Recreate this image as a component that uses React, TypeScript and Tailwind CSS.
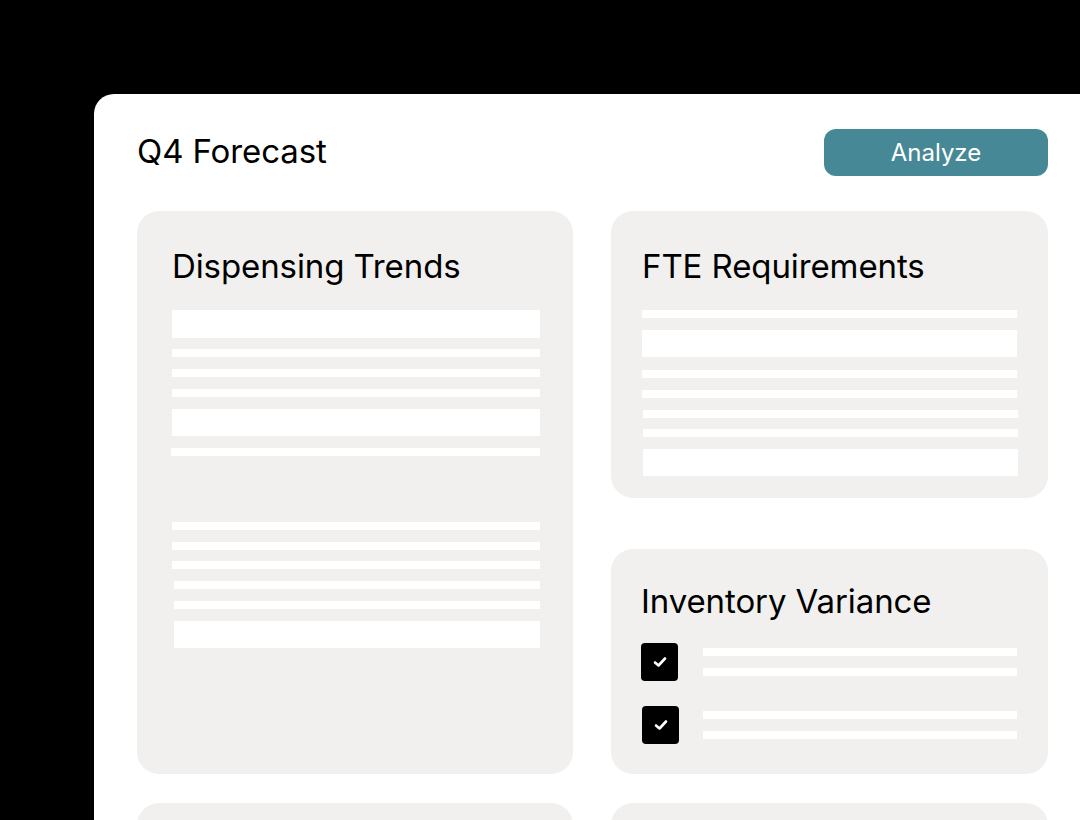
const font = { fontFamily: "Inter, 'Noto Sans', sans-serif" };

function Line({ tall = false, className = "" }: { tall?: boolean; className?: string }) {
  return <div className={`${tall ? "h-[27px]" : "h-2"} bg-white ${className}`} />;
}

function CheckBox() {
  return (
    <div className="flex h-[38px] w-[37px] shrink-0 items-center justify-center rounded-[4px] bg-black">
      <svg width="14" height="12" viewBox="0 0 14 12" fill="none">
        <path d="M2 6.5 L5.5 9.5 L12 2.5" stroke="white" strokeWidth="2.6" strokeLinecap="round" strokeLinejoin="round" />
      </svg>
    </div>
  );
}

export default function App() {
  return (
    <div className="h-[820px] w-[1080px] overflow-hidden bg-black pl-[94px] pt-[94px]" style={font}>
      <div className="h-[760px] w-[1100px] rounded-tl-[20px] bg-white pl-[43px] pt-[35px]">
        {/* header */}
        <div className="flex w-[911px] items-center justify-between">
          <h1 className="-mt-[3px] text-[33px] leading-none tracking-[-0.1px] text-black">Q4 Forecast</h1>
          <button className="flex h-[47px] w-[224px] items-center justify-center rounded-[12px] bg-[#468896] text-[24px] text-white">
            Analyze
          </button>
        </div>

        {/* cards */}
        <div className="mt-[35px] grid w-[911px] grid-cols-[436px_437px] gap-x-[38px] gap-y-[29px]">
          <div className="row-span-2 h-[563px] rounded-[22px] bg-[#f1f0ee] pl-[35px] pr-[33px] pt-[39px]">
            <h2 className="text-[33px] leading-none tracking-[-0.1px] text-black">Dispensing Trends</h2>
            <div className="mt-[27px] flex flex-col">
              <Line tall className="h-[28px]" />
              <Line className="mt-[11px]" />
              <Line className="mt-[12px]" />
              <Line className="mt-[12px]" />
              <Line tall className="mt-[12px]" />
              <Line className="ml-[-1px] mt-[12px]" />
              <Line className="mt-[66px]" />
              <Line className="mt-[12px]" />
              <Line className="mt-[11px]" />
              <Line className="ml-[2px] mt-[12px]" />
              <Line className="ml-[2px] mt-[12px]" />
              <Line tall className="ml-[2px] mt-[12px]" />
            </div>
          </div>

          <div className="h-[287px] rounded-[22px] bg-[#f1f0ee] pl-[31px] pr-[31px] pt-[39px]">
            <h2 className="text-[33px] leading-none tracking-[-0.1px] text-black">FTE Requirements</h2>
            <div className="mt-[27px] flex flex-col">
              <Line />
              <Line tall className="mt-[12px]" />
              <Line className="mt-[13px]" />
              <Line className="mt-[12px]" />
              <Line className="ml-[1px] mr-[-1px] mt-[12px]" />
              <Line className="ml-[1px] mr-[-1px] mt-[11px]" />
              <Line tall className="ml-[1px] mr-[-1px] mt-[12px]" />
            </div>
          </div>

          <div className="mt-[22px] h-[225px] rounded-[22px] bg-[#f1f0ee] pl-[30px] pr-[31px] pt-[36px]">
            <h2 className="text-[33px] leading-none tracking-[-0.1px] text-black">Inventory Variance</h2>
            <div className="mt-[25px] flex flex-col gap-[25px]">
              <div className="flex items-center gap-[25px]">
                <CheckBox />
                <div className="flex flex-1 flex-col gap-[12px]">
                  <Line />
                  <Line />
                </div>
              </div>
              <div className="ml-[1px] flex items-center gap-[24px]">
                <CheckBox />
                <div className="flex flex-1 flex-col gap-[12px]">
                  <Line />
                  <Line />
                </div>
              </div>
            </div>
          </div>

          <div className="h-[120px] rounded-[22px] bg-[#f1f0ee]" />
          <div className="h-[120px] rounded-[22px] bg-[#f1f0ee]" />
        </div>
      </div>
    </div>
  );
}
